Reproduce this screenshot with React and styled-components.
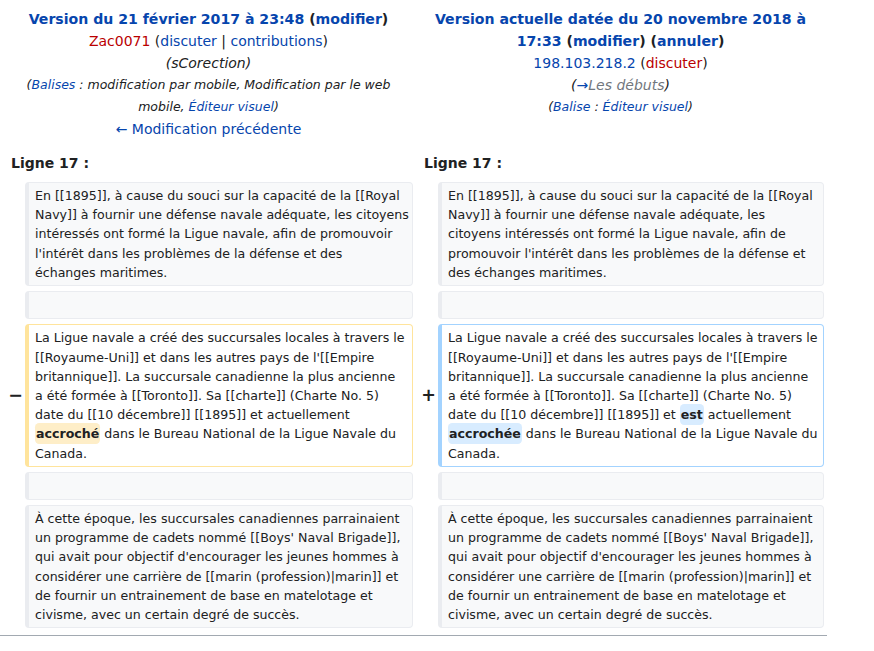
import React from 'react'
import styled, { createGlobalStyle, css } from 'styled-components'

const GlobalStyle = createGlobalStyle`
  body {
    margin: 0;
    background: #fff;
    color: #202122;
    font-family: "DejaVu Sans", "Liberation Sans", sans-serif;
  }
`

const DiffGrid = styled.div`
  display: grid;
  grid-template-columns: 17px 388px 17px 386px;
  gap: 5px 4px;
  padding: 4px;
  width: 828px;
  box-sizing: border-box;
  font-size: 14px;
`

const Title = styled.div`
  grid-column: span 2;
  text-align: center;
  line-height: 22px;
  padding: 4px 0;
`

const Line = styled.div`
  font-style: ${p => (p.$italic ? 'italic' : 'normal')};
  font-size: ${p => (p.$small ? '12.5px' : '14px')};
`

const Strong = styled.div`
  font-weight: bold;
  font-size: 14.1px;
`

const Link = styled.a`
  color: ${p => (p.$red ? '#ba0000' : '#0645ad')};
  text-decoration: none;
  cursor: pointer;
`

const AutoComment = styled.span`
  color: #72777d;
`

const LineNo = styled.div`
  grid-column: span 2;
  font-weight: bold;
  line-height: 22px;
  padding: 3px 7px 3px;
`

const Marker = styled.div`
  display: flex;
  align-items: center;
  justify-content: flex-end;
  font-weight: bold;
  font-size: 17.5px;
  line-height: 1.2;
  margin-right: -2px;
`

const kinds = {
  context: css`
    background: #f8f9fa;
    border-color: #eaecf0;
  `,
  deleted: css`
    background: #fff;
    border-color: #ffe49c;
  `,
  added: css`
    background: #fff;
    border-color: #a3d3ff;
  `,
}

const Cell = styled.div`
  font-size: 12.6px;
  line-height: 19.2px;
  padding: 3px ${p => (p.$left ? '3px' : '5px')} 3px 6px;
  border: 1px solid;
  border-left-width: 4px;
  border-radius: 4px;
  min-height: 20.3px;
  word-wrap: break-word;
  ${p => kinds[p.$kind]}
`

const Change = styled.span`
  font-weight: bold;
  border-radius: 0.33em;
  padding: 0.25em 1px;
  background: ${p => (p.$added ? '#d8ecff' : '#feeec8')};
`

const Rule = styled.hr`
  width: 827px;
  margin: 3px 0 0;
  border: none;
  border-top: 1px solid #a2a9b1;
`

// nbsp keeps the breaks where the original wiki render put them
const first = `En [[1895]], à cause du souci sur la capacité de la [[Royal Navy]] à fournir une défense navale adéquate, les citoyens intéressés ont formé la Ligue navale, afin de promouvoir l'intérêt dans les problèmes de la défense et des échanges\u00a0maritimes.`

const last = `À cette époque, les succursales canadiennes parrainaient un programme de cadets nommé [[Boys' Naval Brigade]], qui avait pour objectif d'encourager les jeunes hommes à considérer une carrière de [[marin (profession)|marin]] et de fournir un entrainement de base en matelotage et civisme, avec un certain degré de succès.`

const head = `La Ligue navale a créé des succursales locales à travers le [[Royaume-Uni]] et dans les autres pays de l'[[Empire britannique]]. La succursale canadienne la plus ancienne a\u00a0été formée à [[Toronto]]. Sa [[charte]] (Charte No. 5) date du [[10 décembre]] [[1895]] et `

function ContextRow({ text }) {
  return (
    <>
      <Marker />
      <Cell $kind="context" $left>
        {text || '\u00a0'}
      </Cell>
      <Marker />
      <Cell $kind="context">{text || '\u00a0'}</Cell>
    </>
  )
}

export default function App() {
  return (
    <>
      <GlobalStyle />
      <DiffGrid>
        <Title>
          <Strong>
            <Link>Version du 21 février 2017 à 23:48</Link> (<Link>modifier</Link>)
          </Strong>
          <Line>
            <Link $red>Zac0071</Link> (<Link>discuter</Link> | <Link>contributions</Link>)
          </Line>
          <Line $italic>(sCorection)</Line>
          <Line $italic $small>
            (<Link>Balises</Link> : modification par mobile, Modification par le web mobile,{' '}
            <Link>Éditeur visuel</Link>)
          </Line>
          <Line>
            <Link>← Modification précédente</Link>
          </Line>
        </Title>
        <Title>
          <Strong>
            <Link>Version actuelle datée du 20 novembre 2018 à 17:33</Link> (<Link>modifier</Link>) (
            <Link>annuler</Link>)
          </Strong>
          <Line>
            <Link>198.103.218.2</Link> (<Link $red>discuter</Link>)
          </Line>
          <Line $italic>
            (<Link>→</Link>
            <AutoComment>Les débuts</AutoComment>)
          </Line>
          <Line $italic $small>
            (<Link>Balise</Link> : <Link>Éditeur visuel</Link>)
          </Line>
        </Title>

        <LineNo>Ligne 17 :</LineNo>
        <LineNo>Ligne 17 :</LineNo>

        <ContextRow text={first} />
        <ContextRow />

        <Marker>−</Marker>
        <Cell $kind="deleted" $left>
          {head}actuellement <Change>accroché</Change> dans le Bureau National de la Ligue Navale du
          Canada.
        </Cell>
        <Marker>+</Marker>
        <Cell $kind="added">
          {head}
          <Change $added>est</Change> actuellement <Change $added>accrochée</Change> dans le Bureau
          National de la Ligue Navale du Canada.
        </Cell>

        <ContextRow />
        <ContextRow text={last} />
      </DiffGrid>
      <Rule />
    </>
  )
}
